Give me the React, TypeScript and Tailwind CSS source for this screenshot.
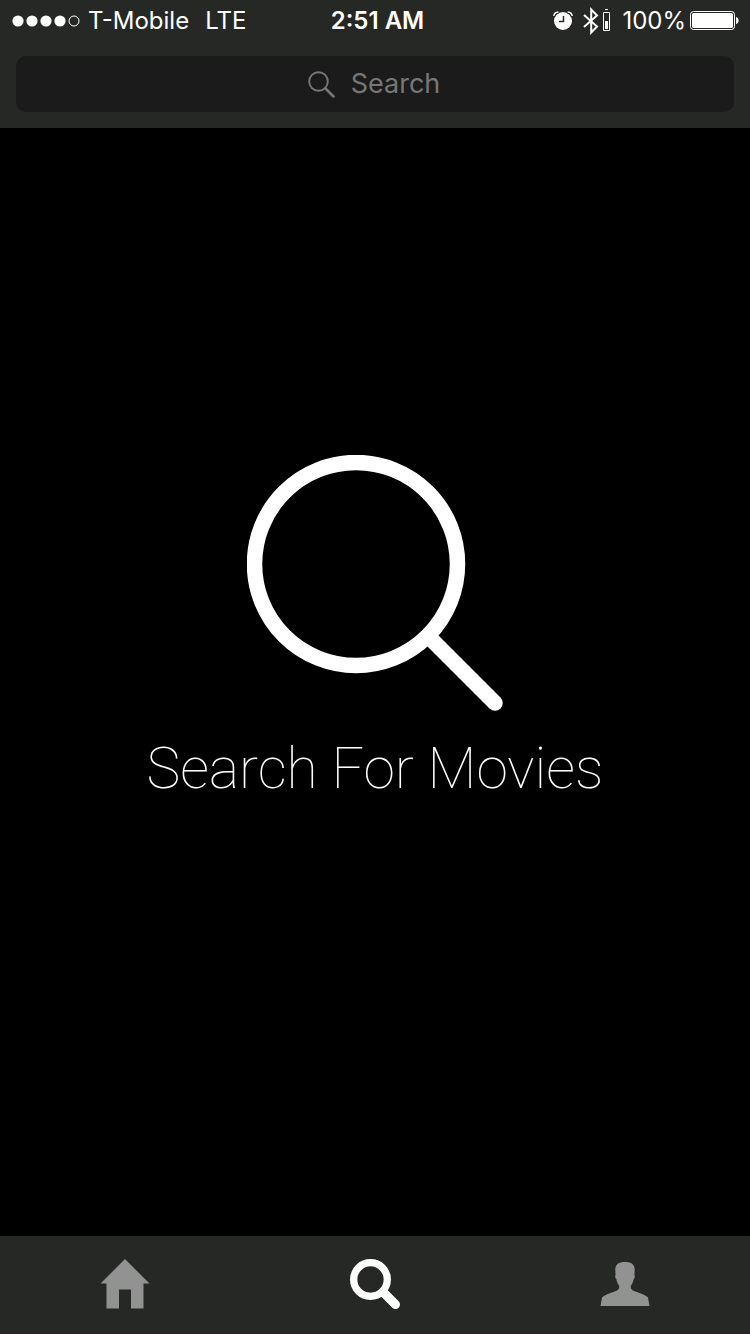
import React from "react";

function SignalDots() {
  return (
    <svg width="68" height="12" viewBox="0 0 68 12" role="img" aria-label="Signal strength 4 of 5">
      <g fill="#fff">
        <circle cx="6" cy="6" r="5.6" />
        <circle cx="20" cy="6" r="5.6" />
        <circle cx="34" cy="6" r="5.6" />
        <circle cx="48" cy="6" r="5.6" />
      </g>
      <circle cx="62" cy="6" r="5" fill="none" stroke="#fff" strokeWidth="1" />
    </svg>
  );
}

function AlarmIcon() {
  return (
    <svg width="20" height="20" viewBox="0 0 20 20" aria-hidden="true">
      <circle cx="10" cy="10" r="9" fill="#fff" />
      <path d="M10.500 5v5.500H6" fill="none" stroke="#252825" strokeWidth="1.500" />
      <path d="M1 5C1.200 2.800 3 1.200 5.600 1M14.400 1C17 1.200 18.800 2.800 19 5" fill="none" stroke="#252825" strokeWidth="3" />
      <path d="M.800 5C1 2.800 2.800 1.200 5.400 1M14.600 1C17.200 1.200 19 2.800 19.200 5" fill="none" stroke="#fff" strokeWidth="1.400" />
    </svg>
  );
}

function BluetoothIcon() {
  return (
    <svg width="27" height="28" viewBox="0 0 27 28" aria-hidden="true">
      <path d="M1 8l13 11.500-5.800 6V2.500l5.800 6L1 20" fill="none" stroke="#fff" strokeWidth="2" />
      <path d="M20.500 5.500h6v18h-6zM22 2.500h3" fill="none" stroke="#fff" strokeWidth="1" />
      <path d="M22 14h3v8h-3z" fill="#fff" />
    </svg>
  );
}

function BatteryIcon() {
  return (
    <svg width="49" height="20" viewBox="0 0 49 20" aria-hidden="true">
      <rect x="0.500" y="0.500" width="44" height="18" rx="3" fill="none" stroke="#fff" />
      <rect x="2" y="2" width="41" height="15" rx="1.500" fill="#fff" />
      <path d="M46 6c3.500.600 3.500 6.400 0 7z" fill="#fff" />
    </svg>
  );
}

function StatusBar() {
  return (
    <div className="grid h-10 grid-cols-[1fr_auto_1fr] items-center pt-px pr-[11px] pl-3 text-2xl leading-10">
      <div className="flex items-center gap-2">
        <SignalDots />
        <span>T-Mobile</span>
        <span className="pl-2">LTE</span>
      </div>
      <time className="pl-1 font-semibold">2:51 AM</time>
      <div className="flex items-center justify-end">
        <AlarmIcon />
        <span className="pr-3 pl-2.5">
          <BluetoothIcon />
        </span>
        <span className="pr-1">100%</span>
        <BatteryIcon />
      </div>
    </div>
  );
}

function SearchField() {
  return (
    <div className="p-4">
      <label className="flex h-14 items-center justify-center gap-4 rounded-[10px] bg-[#1b1b1b] pr-0.5">
        <svg width="27" height="27" viewBox="0 0 27 27" fill="none" stroke="#777" aria-hidden="true">
          <circle cx="10.500" cy="10.500" r="9.300" strokeWidth="1.900" />
          <path d="M17.500 17.500l8 8" strokeWidth="2.500" strokeLinecap="round" />
        </svg>
        <input
          type="search"
          aria-label="Search"
          placeholder="Search"
          className="appearance-none bg-transparent text-[27px] leading-10 text-white outline-none [field-sizing:content] placeholder:text-[#777]"
        />
      </label>
    </div>
  );
}

function EmptyState() {
  return (
    <main className="flex flex-1 flex-col items-center pt-[327px]">
      <svg width="256" height="256" viewBox="0 0 256 256" fill="none" stroke="#fff" aria-hidden="true">
        <circle cx="109" cy="109" r="101.500" strokeWidth="15.500" />
        <path d="M182 182l66 66" strokeWidth="15.500" strokeLinecap="round" />
      </svg>
      <h1 className="pt-[22px] font-['Roboto','Inter',sans-serif] text-[57px] leading-[72px] font-thin">Search For Movies</h1>
    </main>
  );
}

function TabBar() {
  return (
    <nav className="grid h-[98px] grid-cols-3 border-b-2 border-[#2b222b] bg-[#252825] text-[#929292]">
      <button type="button" aria-label="Home" className="flex items-center justify-center">
        <svg width="50" height="50" viewBox="0 0 50 50" fill="currentColor" aria-hidden="true">
          <path d="M25 0L49.500 24.500H43.500V49.500H31V30.500H19V49.500H6.500V24.500H.500z" />
        </svg>
      </button>
      <button type="button" aria-label="Search" aria-current="page" className="flex items-center justify-center text-white">
        <svg width="50" height="50" viewBox="0 0 50 50" fill="none" stroke="currentColor" aria-hidden="true">
          <circle cx="20.500" cy="20.500" r="16.800" strokeWidth="7.300" />
          <path d="M34 34l11.500 11.500" strokeWidth="9" strokeLinecap="round" />
        </svg>
      </button>
      <button type="button" aria-label="Profile" className="flex items-center justify-center">
        <svg width="50" height="50" viewBox="0 0 50 50" fill="currentColor" aria-hidden="true">
          <path d="M25 3C18.500 3 15 5.500 15.300 11.500L15.600 16C14.800 16.500 15.200 19 16.300 20C16.800 23 18 25 19.200 27C19.500 29.500 18.500 31 16 32C10.500 34 4.500 36 2 38.500L.500 47H49.500L48 38.500C45.500 36 39.500 34 34 32C31.500 31 30.500 29.500 30.800 27C32 25 33.200 23 33.700 20C34.800 19 35.200 16.500 34.400 16L34.700 11.500C35 5.500 31.500 3 25 3z" />
        </svg>
      </button>
    </nav>
  );
}

export default function App() {
  return (
    <div className="flex min-h-screen flex-col bg-black font-['Inter','Liberation_Sans',sans-serif] text-white">
      <header className="bg-[#252825]">
        <StatusBar />
        <SearchField />
      </header>
      <EmptyState />
      <TabBar />
    </div>
  );
}
